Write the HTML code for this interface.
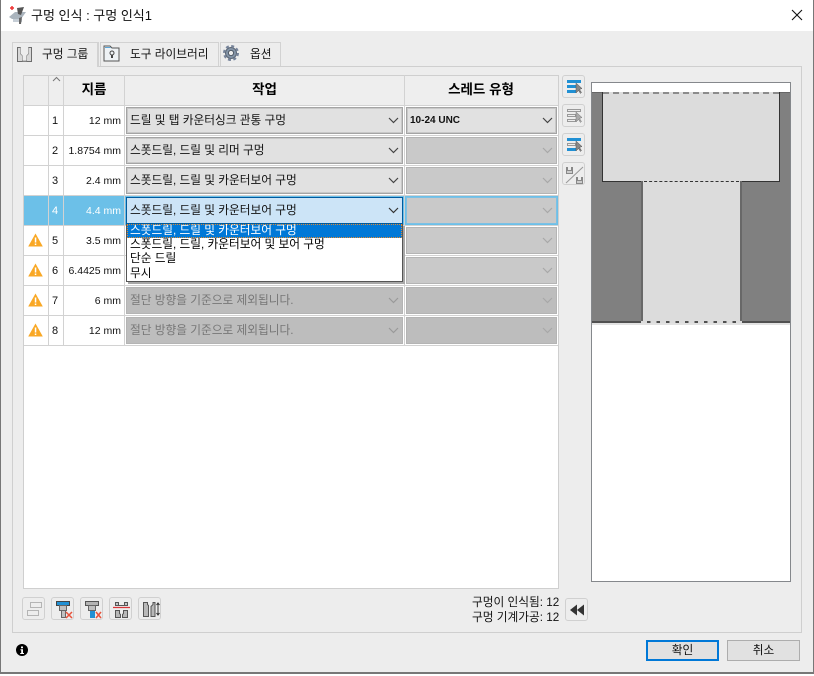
<!DOCTYPE html>
<html lang="ko"><head><meta charset="utf-8"><title>구멍 인식</title>
<style>
*{box-sizing:border-box}
html,body{margin:0;padding:0;width:814px;height:676px;overflow:hidden;background:#fff}
body{position:relative;font-family:"Liberation Sans","Noto Sans CJK KR",sans-serif;font-size:11.700px;color:#111}
div,span.a,svg.a{position:absolute}
.t{white-space:nowrap}
.sel{height:27px;border:1px solid #a4a4a4;box-shadow:inset 0 0 0 1px #c8c8c8;background:#e1e1e1;line-height:25px;padding-left:3px;white-space:nowrap;overflow:hidden;color:#111}
.dis{background:#c9c9c9;border-color:#b4b4b4;box-shadow:none}
.off{background:#bdbdbd;border-color:#b4b4b4;box-shadow:none;color:#777}
.chev{position:absolute;right:3px;top:9px;width:11px;height:7px}
.hl{background:#d2d2d2}
.n{text-align:center;width:14px;left:48px;height:14px;line-height:14px;font-size:11px}
.d{text-align:right;left:63px;width:58px;height:14px;line-height:14px;white-space:nowrap;font-size:10.500px}
.ib{width:23px;height:23px;border:1px solid #d0d0d0;border-radius:3px;background:#ededed}
.tab{height:24px;border:1px solid #d2d2d2;border-bottom:0;background:#ededed;line-height:23px;white-space:nowrap}
.hd{font-weight:bold;font-size:13.500px;text-align:center;top:75px;height:30px;line-height:29px;color:#000}
</style></head><body>
<div style="left:0;top:0;width:814px;height:674px;background:#ededed;border:1px solid #777;border-top:0;border-bottom-width:2px"></div>
<div style="left:0;top:0;width:814px;height:31px;background:#fff;border-left:1px solid #777;border-right:1px solid #777"></div>
<svg class="a" style="left:8px;top:5px" width="20" height="20" viewBox="0 0 20 20"><path d="M2 3h4M4 1v4" stroke="#e33" stroke-width="1.500"/><path d="M1 12l6-5h11l-5 7H4z" fill="#aab4bd"/><path d="M9 3l7-1-3 8-3-1z" fill="#555"/><path d="M5 14h9v3H5z" fill="#c6ced6"/><path d="M11 13l3-1-1 7h-2z" fill="#666"/></svg>
<div class="t" style="left:31px;top:7px;font-size:13px;line-height:18px">구멍 인식 : 구멍 인식1</div>
<svg class="a" style="left:791px;top:9px" width="12" height="12"><path d="M1 1l10 10M11 1L1 11" stroke="#111" stroke-width="1.100"/></svg>

<div style="left:12px;top:66px;width:790px;height:567px;border:1px solid #cfcfcf;background:#ededed"></div>
<div class="tab" style="left:12px;top:42px;width:87px;height:25px;padding-left:29px;border-right:2px solid #d2d2d2">구멍 그룹</div>
<div class="tab" style="left:100px;top:42px;width:119px;padding-left:29px">도구 라이브러리</div>
<div class="tab" style="left:220px;top:42px;width:61px;padding-left:29px">옵션</div>
<svg class="a" style="left:16px;top:46px" width="17" height="17"><path d="M1.500 1.500h14v14h-14z" fill="#d8d8d8" stroke="none"/><path d="M1.500 1.500v14h14v-14h-3v6l-2 2v5h-4v-5l-2-2v-6z" fill="#d8d8d8" stroke="#6d6d6d"/><path d="M6.500 9.500l-2-2v-6h8v6l-2 2v5h-4z" fill="#ededed"/><path d="M6.500 14.500h4v1h-4z" fill="#9a9a9a"/></svg>
<svg class="a" style="left:103px;top:44px" width="18" height="18"><path d="M1 2h6l2 2h7v13H1z" fill="#eef2f5" stroke="#555"/><path d="M2 3h5l1 1H2z" fill="#5aa5d8"/><circle cx="9" cy="9" r="2" fill="none" stroke="#444"/><path d="M9 11v3" stroke="#444" stroke-width="2"/></svg>
<svg class="a" style="left:223px;top:45px" width="16" height="16"><circle cx="8" cy="8" r="5.500" fill="#8595a8" stroke="#5b6675"/><circle cx="8" cy="8" r="7" fill="none" stroke="#76839a" stroke-width="2" stroke-dasharray="3 2.500"/><circle cx="8" cy="8" r="2.600" fill="#ededed" stroke="#4f5966"/></svg>

<!-- table -->
<div style="left:23px;top:75px;width:536px;height:514px;background:#fff;border:1px solid #cfcfcf"></div>
<div style="left:24px;top:76px;width:534px;height:29px;background:#eee"></div>
<div style="left:24px;top:195px;width:534px;height:30px;background:#6cc0e8"></div>
<div class="hl" style="left:48px;top:75px;width:1px;height:270px"></div>
<div class="hl" style="left:63px;top:75px;width:1px;height:270px"></div>
<div class="hl" style="left:124px;top:75px;width:1px;height:270px"></div>
<div class="hl" style="left:404px;top:75px;width:1px;height:270px"></div>
<div class="hl" style="left:24px;top:105px;width:534px;height:1px"></div>
<div class="hl" style="left:24px;top:135px;width:534px;height:1px"></div>
<div class="hl" style="left:24px;top:165px;width:534px;height:1px"></div>
<div class="hl" style="left:24px;top:195px;width:534px;height:1px"></div>
<div class="hl" style="left:24px;top:225px;width:534px;height:1px"></div>
<div class="hl" style="left:24px;top:255px;width:534px;height:1px"></div>
<div class="hl" style="left:24px;top:285px;width:534px;height:1px"></div>
<div class="hl" style="left:24px;top:315px;width:534px;height:1px"></div>
<div class="hl" style="left:24px;top:345px;width:534px;height:1px"></div>

<svg class="a" style="left:52px;top:76px" width="9" height="6"><path d="M1 5l3.500-3.500L8 5" fill="none" stroke="#777"/></svg>
<div class="hd" style="left:64px;width:60px">지름</div>
<div class="hd" style="left:125px;width:279px">작업</div>
<div class="hd" style="left:405px;width:152px">스레드 유형</div>

<div class="n" style="top:114px">1</div><div class="d" style="top:114px">12 mm</div>
<div class="n" style="top:144px">2</div><div class="d" style="top:144px">1.8754 mm</div>
<div class="n" style="top:174px">3</div><div class="d" style="top:174px">2.4 mm</div>
<div class="n" style="top:204px;color:#fff">4</div><div class="d" style="top:204px;color:#fff">4.4 mm</div>
<div class="n" style="top:234px">5</div><div class="d" style="top:234px">3.5 mm</div>
<div class="n" style="top:264px">6</div><div class="d" style="top:264px">6.4425 mm</div>
<div class="n" style="top:294px">7</div><div class="d" style="top:294px">6 mm</div>
<div class="n" style="top:324px">8</div><div class="d" style="top:324px">12 mm</div>

<div class="sel" style="left:126px;top:107px;width:277px">드릴 및 탭 카운터싱크 관통 구멍<svg class="chev" viewBox="0 0 11 7"><path d="M1 1l4.500 4.500L10 1" fill="none" stroke="#444" stroke-width="1.200"/></svg></div>
<div class="sel" style="left:126px;top:137px;width:277px">스폿드릴, 드릴 및 리머 구멍<svg class="chev" viewBox="0 0 11 7"><path d="M1 1l4.500 4.500L10 1" fill="none" stroke="#444" stroke-width="1.200"/></svg></div>
<div class="sel" style="left:126px;top:167px;width:277px">스폿드릴, 드릴 및 카운터보어 구멍<svg class="chev" viewBox="0 0 11 7"><path d="M1 1l4.500 4.500L10 1" fill="none" stroke="#444" stroke-width="1.200"/></svg></div>
<div class="sel" style="left:126px;top:197px;width:277px;background:#cce4f7;border-color:#005a9e;box-shadow:none">스폿드릴, 드릴 및 카운터보어 구멍<svg class="chev" viewBox="0 0 11 7"><path d="M1 1l4.500 4.500L10 1" fill="none" stroke="#333" stroke-width="1.200"/></svg></div>
<div class="sel off" style="left:126px;top:287px;width:277px">절단 방향을 기준으로 제외됩니다.<svg class="chev" viewBox="0 0 11 7"><path d="M1 1l4.500 4.500L10 1" fill="none" stroke="#999" stroke-width="1.200"/></svg></div>
<div class="sel off" style="left:126px;top:317px;width:277px">절단 방향을 기준으로 제외됩니다.<svg class="chev" viewBox="0 0 11 7"><path d="M1 1l4.500 4.500L10 1" fill="none" stroke="#999" stroke-width="1.200"/></svg></div>

<div class="sel" style="left:406px;top:107px;width:151px;font-weight:bold;font-size:10px">10-24 UNC<svg class="chev" viewBox="0 0 11 7"><path d="M1 1l4.500 4.500L10 1" fill="none" stroke="#444" stroke-width="1.200"/></svg></div>
<div class="sel dis" style="left:406px;top:137px;width:151px"><svg class="chev" viewBox="0 0 11 7"><path d="M1 1l4.500 4.500L10 1" fill="none" stroke="#a8a8a8" stroke-width="1.200"/></svg></div>
<div class="sel dis" style="left:406px;top:167px;width:151px"><svg class="chev" viewBox="0 0 11 7"><path d="M1 1l4.500 4.500L10 1" fill="none" stroke="#a8a8a8" stroke-width="1.200"/></svg></div>
<div class="sel dis" style="left:406px;top:197px;width:151px;border-color:#7cc0e4"><svg class="chev" viewBox="0 0 11 7"><path d="M1 1l4.500 4.500L10 1" fill="none" stroke="#a8a8a8" stroke-width="1.200"/></svg></div>
<div class="sel dis" style="left:406px;top:227px;width:151px"><svg class="chev" viewBox="0 0 11 7"><path d="M1 1l4.500 4.500L10 1" fill="none" stroke="#a8a8a8" stroke-width="1.200"/></svg></div>
<div class="sel dis" style="left:406px;top:257px;width:151px"><svg class="chev" viewBox="0 0 11 7"><path d="M1 1l4.500 4.500L10 1" fill="none" stroke="#a8a8a8" stroke-width="1.200"/></svg></div>
<div class="sel off" style="left:406px;top:287px;width:151px"><svg class="chev" viewBox="0 0 11 7"><path d="M1 1l4.500 4.500L10 1" fill="none" stroke="#a8a8a8" stroke-width="1.200"/></svg></div>
<div class="sel off" style="left:406px;top:317px;width:151px"><svg class="chev" viewBox="0 0 11 7"><path d="M1 1l4.500 4.500L10 1" fill="none" stroke="#a8a8a8" stroke-width="1.200"/></svg></div>

<!-- dropdown -->
<div style="left:128px;top:226px;width:277px;height:58px;background:#a8a8a8"></div>
<div style="left:126px;top:224px;width:277px;height:58px;background:#fff;border:1px solid #555;border-top:0"></div>
<div class="t" style="left:127px;top:224px;width:275px;height:14px;background:#0078d7;color:#fff;line-height:14px;padding-left:3px;outline:1px dotted #e08a30;outline-offset:-1px">스폿드릴, 드릴 및 카운터보어 구멍</div>
<div class="t" style="left:127px;top:238px;height:14px;line-height:14px;padding-left:3px;color:#000">스폿드릴, 드릴, 카운터보어 및 보어 구멍</div>
<div class="t" style="left:127px;top:252px;height:14px;line-height:14px;padding-left:3px;color:#000">단순 드릴</div>
<div class="t" style="left:127px;top:267px;height:14px;line-height:14px;padding-left:3px;color:#000">무시</div>

<!-- warnings -->
<svg class="a" style="left:28px;top:233px" width="15" height="14"><path d="M7.500 .5L14.800 13.500H.2z" fill="#f9a825"/><path d="M6.800 4.500h1.500v5H6.800zM6.800 10.500h1.500v1.500H6.800z" fill="#fff"/></svg>
<svg class="a" style="left:28px;top:263px" width="15" height="14"><path d="M7.500 .5L14.800 13.500H.2z" fill="#f9a825"/><path d="M6.800 4.500h1.500v5H6.800zM6.800 10.500h1.500v1.500H6.800z" fill="#fff"/></svg>
<svg class="a" style="left:28px;top:293px" width="15" height="14"><path d="M7.500 .5L14.800 13.500H.2z" fill="#f9a825"/><path d="M6.800 4.500h1.500v5H6.800zM6.800 10.500h1.500v1.500H6.800z" fill="#fff"/></svg>
<svg class="a" style="left:28px;top:323px" width="15" height="14"><path d="M7.500 .5L14.800 13.500H.2z" fill="#f9a825"/><path d="M6.800 4.500h1.500v5H6.800zM6.800 10.500h1.500v1.500H6.800z" fill="#fff"/></svg>

<!-- side buttons -->
<div class="ib" style="left:562px;top:75px"><svg class="a" style="left:1px;top:1px" width="20" height="20"><path d="M3 3h14v3H3zM3 8h9v3H3zM3 13h9v3H3z" fill="#2090d4"/><path d="M12 6v10l2.500-2.500 2 3 1-1-2-3 2.500-1z" fill="#888" stroke="#555" stroke-width=".5"/></svg></div>
<div class="ib" style="left:562px;top:104px"><svg class="a" style="left:1px;top:1px" width="20" height="20"><path d="M3.500 3.500h13v2h-13zM3.500 8.500h8v2h-8zM3.500 13.500h8v2h-8z" fill="#ededed" stroke="#999"/><path d="M12 6v10l2.500-2.500 2 3 1-1-2-3 2.500-1z" fill="#aaa" stroke="#777" stroke-width=".5"/></svg></div>
<div class="ib" style="left:562px;top:133px"><svg class="a" style="left:1px;top:1px" width="20" height="20"><path d="M3 3h14v3H3zM3 13h9v3H3z" fill="#2090d4"/><path d="M3.500 8.500h8v2h-8z" fill="#ededed" stroke="#999"/><path d="M12 6v10l2.500-2.500 2 3 1-1-2-3 2.500-1z" fill="#888" stroke="#555" stroke-width=".5"/></svg></div>
<div class="ib" style="left:562px;top:162px"><svg class="a" style="left:1px;top:1px" width="21" height="21"><path d="M2.500 3.500v6h6v-6h-1v3h-4v-3z" fill="#ccc" stroke="#888"/><path d="M12.500 13.500v6h6v-6h-1v3h-4v-3z" fill="#ccc" stroke="#888"/><path d="M2 19L19 3" stroke="#999" stroke-width="1"/></svg></div>

<!-- preview -->
<div style="left:591px;top:82px;width:200px;height:500px;background:#fff;border:1px solid #85888c"></div>
<div style="left:592px;top:92px;width:198px;height:230px;background:#808080"></div>
<div style="left:592px;top:92px;width:198px;height:1px;background:#666"></div>
<div style="left:602px;top:92px;width:178px;height:90px;background:#dcdcdc;border:1px solid #333;border-top:0"></div>
<div style="left:641px;top:181px;width:101px;height:141px;background:#dcdcdc;border-left:2px solid #686868;border-right:2px solid #686868"></div>
<div style="left:603px;top:92px;width:176px;height:0;border-top:2px dashed #8c8c8c"></div>
<div style="left:644px;top:181px;width:95px;height:0;border-top:1px dashed #333"></div>
<div style="left:592px;top:322px;width:198px;height:3px;background:#e2e2e2"></div>
<div style="left:592px;top:321px;width:198px;height:2px;background:#505050"></div>
<div style="left:641px;top:321px;width:101px;height:0;border-top:2px dashed #dcdcdc"></div>

<!-- bottom buttons -->
<div class="ib" style="left:22px;top:597px"><svg class="a" style="left:1px;top:1px" width="21" height="21"><path d="M6.500 3.500h11v5h-11zM3.500 11.500h11v5h-11z" fill="#ededed" stroke="#b4b4b4"/></svg></div>
<div class="ib" style="left:51px;top:597px"><svg class="a" style="left:1px;top:1px" width="21" height="21"><path d="M3.500 2.500h13v4h-13z" fill="#2090d4" stroke="#444"/><path d="M6.500 6.500h7v5h-7z" fill="#c0c0c0" stroke="#666"/><path d="M8.500 11.500v7h4v-7z" fill="#c0c0c0" stroke="#666"/><path d="M13 13l6 6M19 13l-6 6" stroke="#e8523a" stroke-width="1.500"/></svg></div>
<div class="ib" style="left:80px;top:597px"><svg class="a" style="left:1px;top:1px" width="21" height="21"><path d="M3.500 2.500h13v4h-13z" fill="#b4b4b4" stroke="#555"/><path d="M6.500 6.500h7v5h-7z" fill="#c0c0c0" stroke="#666"/><path d="M8 12h5v7H8z" fill="#2090d4"/><path d="M14 13l5 6M19 13l-5 6" stroke="#e8523a" stroke-width="1.500"/></svg></div>
<div class="ib" style="left:109px;top:597px"><svg class="a" style="left:1px;top:1px" width="21" height="21"><path d="M4.500 3.500h3v3h6v-3h3v3h-12z" fill="#c4c4c4" stroke="#555"/><path d="M2 8.500h17" stroke="#d8363a" stroke-width="1.200"/><path d="M4.500 11.500h4v3l1 1v3h-5zM16.500 11.500h-4v3l-1 1v3h5z" fill="#b8b8b8" stroke="#555"/></svg></div>
<div class="ib" style="left:138px;top:597px"><svg class="a" style="left:1px;top:1px" width="21" height="21"><path d="M3.500 3.500h4v2l1 1v11h-5zM15 3.500h-2v2l-2 2v10h4z" fill="#b8b8b8" stroke="#555"/><path d="M18 4v12M16.500 6L18 4l1.500 2M16.500 14L18 16l1.500-2" fill="none" stroke="#333"/></svg></div>

<div class="t" style="left:472px;top:596px;height:14px;line-height:14px">구멍이 인식됨: 12</div>
<div class="t" style="left:472px;top:611px;height:14px;line-height:14px">구멍 기계가공: 12</div>
<div class="ib" style="left:565px;top:598px"><svg class="a" style="left:3px;top:5px" width="16" height="12"><path d="M1 6l7-5.500v11zM8 6l7-5.500v11z" fill="#333"/></svg></div>

<svg class="a" style="left:16px;top:644px" width="12" height="12"><circle cx="6" cy="6" r="6" fill="#000"/><path d="M5 2.500h2v1.800H5zM4.500 5.300H7V9h1v1H4.200V9h1V6.300h-.7z" fill="#fff"/></svg>
<div style="left:646px;top:640px;width:73px;height:21px;background:#e1e1e1;border:2px solid #0078d7;text-align:center;line-height:18px;color:#111">확인</div>
<div style="left:727px;top:640px;width:73px;height:21px;background:#e1e1e1;border:1px solid #adadad;text-align:center;line-height:20px;color:#111">취소</div>
</body></html>
